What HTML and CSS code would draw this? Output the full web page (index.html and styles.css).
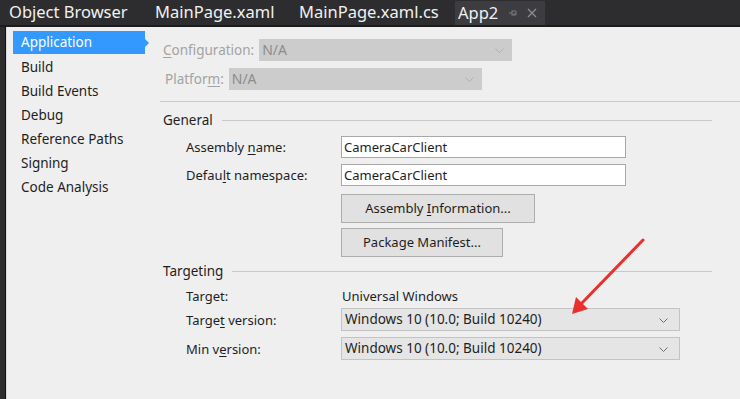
FILE: index.html
```html
<!DOCTYPE html>
<html>
<head>
<meta charset="utf-8">
<link rel="stylesheet" href="styles.css">
</head>
<body>
<div class="tabbar">
  <div class="tab t1">Object Browser</div>
  <div class="tab t2">MainPage.xaml</div>
  <div class="tab t3">MainPage.xaml.cs</div>
  <div class="tab active">App2
    <svg class="pin" width="10" height="8" viewBox="0 0 10 8"><path d="M1 4h3M4 1.5v5M4 2h4v4H4M5 5h3" fill="none" stroke="#7a7a80" stroke-width="1"/></svg>
    <svg class="close" width="10" height="10" viewBox="0 0 10 10"><path d="M1 1L9 9M9 1L1 9" stroke="#8a8a90" stroke-width="1.4"/></svg>
  </div>
</div>
<div class="main">
  <div class="edge"></div>
  <div class="panel">
    <nav class="sidebar">
      <div class="item sel">Application</div>
      <div class="item">Build</div>
      <div class="item">Build Events</div>
      <div class="item">Debug</div>
      <div class="item">Reference Paths</div>
      <div class="item">Signing</div>
      <div class="item">Code Analysis</div>
    </nav>
    <section class="content">
      <div class="row cfg">
        <span class="dlabel"><u>C</u>onfiguration:</span>
        <div class="dsel w253">N/A<svg class="chev" width="9" height="5" viewBox="0 0 9 5"><path d="M0.5 0.5L4.5 4.5L8.5 0.5" fill="none" stroke="#b0b0b0"/></svg></div>
      </div>
      <div class="row plat">
        <span class="dlabel">Platfor<u>m</u>:</span>
        <div class="dsel w253">N/A<svg class="chev" width="9" height="5" viewBox="0 0 9 5"><path d="M0.5 0.5L4.5 4.5L8.5 0.5" fill="none" stroke="#b0b0b0"/></svg></div>
      </div>
      <div class="hr"></div>
      <div class="group"><span>General</span><div class="gline"></div></div>
      <div class="frow r1"><span class="lbl">Assembly <u>n</u>ame:</span><div class="input">CameraCarClient</div></div>
      <div class="frow r2"><span class="lbl">Defau<u>l</u>t namespace:</span><div class="input">CameraCarClient</div></div>
      <div class="frow r3"><span class="lbl"></span><div class="btn b1">Assembly <u>I</u>nformation...</div></div>
      <div class="frow r4"><span class="lbl"></span><div class="btn b2">Package Manifest...</div></div>
      <div class="group tg"><span>Targeting</span><div class="gline"></div></div>
      <div class="frow r5"><span class="lbl">Target:</span><span class="val">Universal Windows</span></div>
      <div class="frow r6"><span class="lbl">Targe<u>t</u> version:</span><div class="sel2">Windows 10 (10.0; Build 10240)<svg class="chev2" width="9" height="5" viewBox="0 0 9 5"><path d="M0.5 0.5L4.5 4.5L8.5 0.5" fill="none" stroke="#707070"/></svg></div></div>
      <div class="frow r7"><span class="lbl">Min v<u>e</u>rsion:</span><div class="sel2">Windows 10 (10.0; Build 10240)<svg class="chev2" width="9" height="5" viewBox="0 0 9 5"><path d="M0.5 0.5L4.5 4.5L8.5 0.5" fill="none" stroke="#707070"/></svg></div></div>
    </section>
  </div>
</div>
<svg class="arrow" width="740" height="399" viewBox="0 0 740 399">
  <path d="M643 240 L581 304" stroke="#e8302c" stroke-width="3" stroke-linecap="round"/>
  <path d="M572 314 L576 297 L588 309 Z" fill="#e8302c"/>
</svg>
</body>
</html>
```
FILE: styles.css
```css
* { box-sizing: border-box; }
html, body { margin: 0; padding: 0; }
body {
  width: 740px; height: 399px; overflow: hidden;
  background: #2d2d30;
  font-family: "Noto Sans", "Open Sans", sans-serif;
  font-size: 13px;
  color: #1e1e1e;
  position: relative;
}
u { text-decoration: underline; text-underline-offset: 2px; }
.tabbar {
  height: 27px; display: flex; align-items: flex-end;
  background: #2d2d30; border-bottom: 2px solid #1b1b1c;
  color: #f1f1f1; font-size: 16.5px;
}
.tab { height: 24px; line-height: 22px; white-space: nowrap; }
.t1 { padding-left: 9px; width: 155px; }
.t2 { width: 144px; }
.t3 { width: 156px; }
.tab.active {
  background: #3c3c41; padding: 0 8px 0 3px; display: flex; align-items: center;
}
.pin { margin-left: 10px; }
.close { margin-left: 9px; }
.main { display: flex; height: 372px; }
.edge { width: 6px; background: #2d2d30; border-right: 1px solid #111; }
.panel { flex: 1; background: #efefef; display: flex; border-left: 1px solid #dcdcdc; }
.sidebar { width: 151px; padding: 4px 0 0 6px; }
.item { height: 24px; line-height: 23px; padding-left: 8px; width: 132px; font-size: 13.5px; position: relative; }
.item.sel { background: #3399ff; color: #fff; height: 23px; margin-bottom: 2px; }
.item.sel::after {
  content: ""; position: absolute; right: -4px; top: 8px;
  border-left: 4px solid #3399ff; border-top: 4px solid transparent; border-bottom: 4px solid transparent;
}
.content { flex: 1; padding-top: 12px; }
.row { display: flex; align-items: center; height: 22px; }
.cfg { padding-left: 5px; }
.plat { padding-left: 7px; margin-top: 7px; }
.dlabel { color: #a3a3a3; font-size: 13.5px; margin-right: 5px; }
.dsel {
  height: 22px; background: #cccccc; color: #8c8c8c; font-size: 14px;
  padding-left: 3px; line-height: 21px; position: relative;
}
.w253 { width: 253px; }
.chev { position: absolute; right: 8px; top: 9px; }
.hr { height: 1px; background: #c9c9c9; margin: 11px 0 0 2px; }
.group { display: flex; align-items: center; height: 18px; margin-top: 9px; padding-left: 5px; padding-right: 28px; font-size: 13.5px; }
.group span { margin-right: 9px; }
.gline { height: 1px; background: #c9c9c9; flex: 1; }
.frow { display: flex; align-items: center; }
.lbl { width: 183px; padding-left: 28px; font-size: 13px; white-space: nowrap; }
.input {
  width: 285px; height: 22px; background: #fff; border: 1px solid #a8a8a8;
  line-height: 20px; padding-left: 2px; font-size: 13px;
}
.r1 { margin-top: 7px; }
.r2 { margin-top: 6px; }
.btn {
  height: 29px; background: #e1e1e1; border: 1px solid #adadad;
  font-size: 13px; text-align: center; line-height: 27px;
}
.r3 { margin-top: 8px; }
.b1 { width: 194px; }
.r4 { margin-top: 5px; }
.b2 { width: 162px; }
.tg { margin-top: 5px; }
.r5 { margin-top: 7px; height: 18px; }
.val { font-size: 13px; padding-left: 1px; }
.sel2 {
  width: 339px; height: 23px; background: #e5e5e5; border: 1px solid #c3c3c3;
  font-size: 13.5px; line-height: 21px; padding-left: 3px; position: relative;
}
.chev2 { position: absolute; right: 11px; top: 9px; }
.r6 { margin-top: 3px; }
.r7 { margin-top: 6px; }
.arrow { position: absolute; left: 0; top: 0; pointer-events: none; }
```
